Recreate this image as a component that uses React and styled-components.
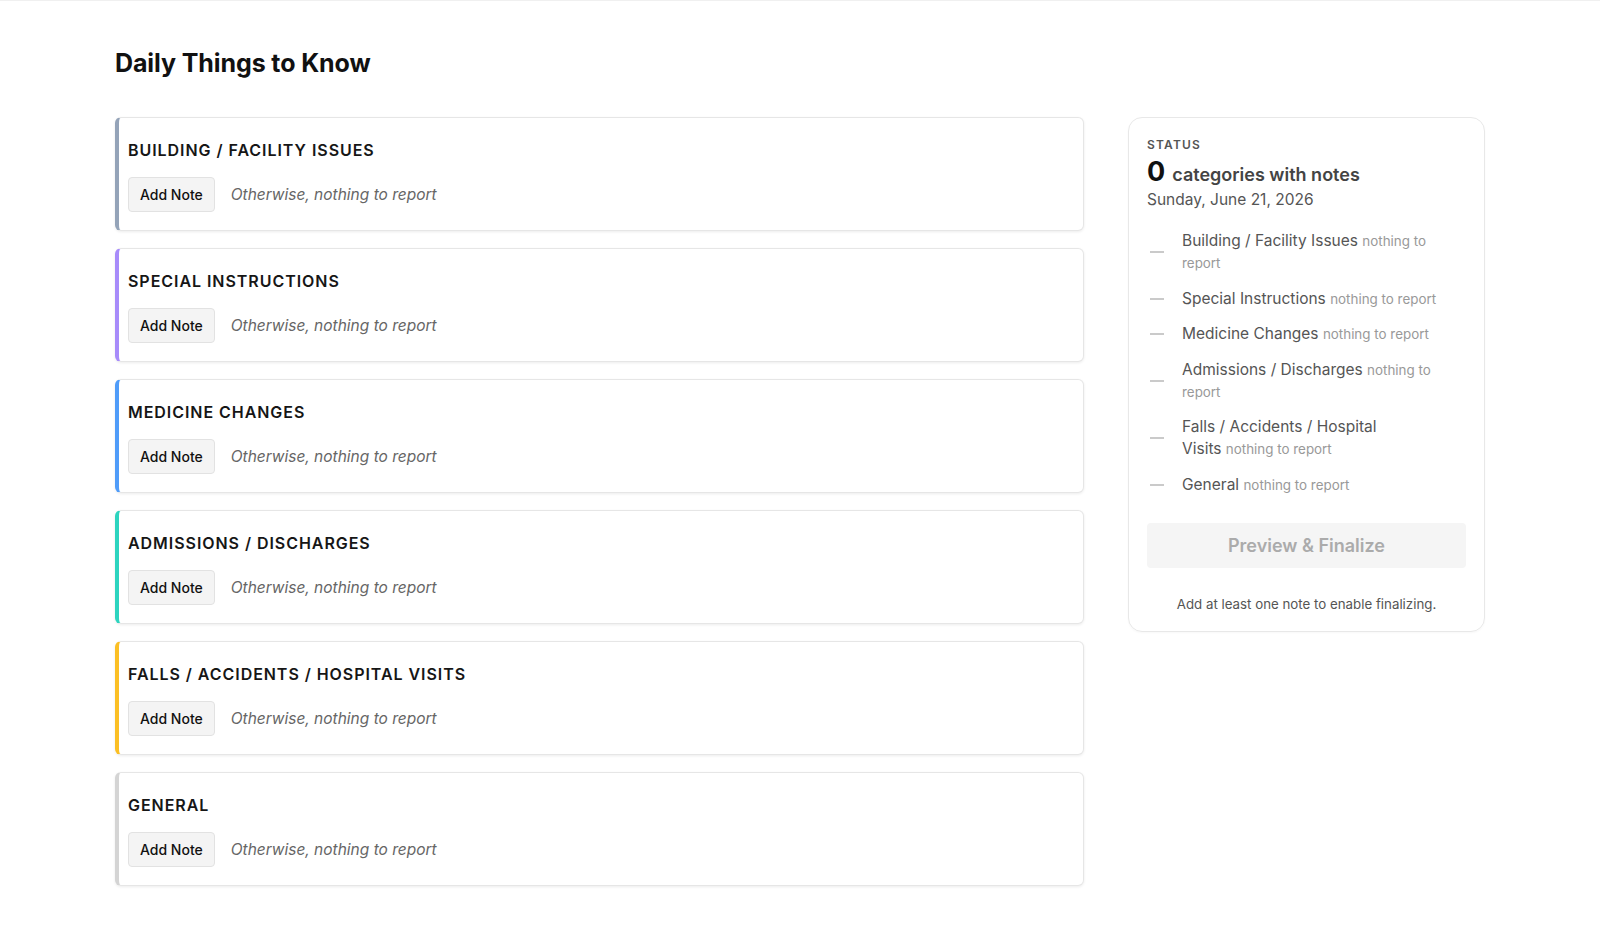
import React from 'react';
import styled, { createGlobalStyle } from 'styled-components';

//#region styles
const GlobalStyle = createGlobalStyle`
	* { box-sizing: border-box; }
	body {
		margin: 0;
		background: #fff;
		font-family: Inter, "Liberation Sans", sans-serif;
		color: #111;
		border-top: 1px solid #f0f0f0;
	}
`;

const Page = styled.div`
	max-width: 1370px;
	margin: 0 auto;
	padding: 46px 0 40px;
`;

const Title = styled.h1`
	margin: 0 0 38px;
	font-size: 25px;
	line-height: 32px;
	font-weight: 700;
	letter-spacing: -0.1px;
	color: #111;
`;

const Layout = styled.div`
	display: grid;
	grid-template-columns: 1fr 357px;
	gap: 44px;
	align-items: start;
`;

const CardList = styled.div`
	display: flex;
	flex-direction: column;
	gap: 17px;
`;

const Card = styled.section`
	border: 1px solid #e6e6e6;
	border-left: 4px solid ${(p) => p.accent};
	border-radius: 6px;
	box-shadow: 0 1px 3px rgba(0, 0, 0, 0.08);
	padding: 20px 18px 18px 9px;
	background: #fff;
`;

const CardTitle = styled.h2`
	margin: 0 0 15px;
	font-size: 16px;
	line-height: 24px;
	font-weight: 600;
	letter-spacing: 0.95px;
	text-transform: uppercase;
	color: #161616;
`;

const Row = styled.div`
	display: flex;
	align-items: center;
	gap: 16px;
`;

const AddButton = styled.button`
	height: 35px;
	padding: 0 11px;
	border: 1px solid #e2e2e2;
	border-radius: 4px;
	background: #f4f4f4;
	font-family: inherit;
	font-size: 14px;
	font-weight: 500;
	color: #111;
	cursor: pointer;
`;

const Placeholder = styled.span`
	font-size: 15.5px;
	font-style: italic;
	color: #666;
`;

const Panel = styled.aside`
	border: 1px solid #e8e8e8;
	border-radius: 14px;
	box-shadow: 0 1px 2px rgba(0, 0, 0, 0.03);
	padding: 19px 18px 18px;
`;

const Eyebrow = styled.div`
	font-size: 12px;
	line-height: 16px;
	font-weight: 600;
	letter-spacing: 1.2px;
	text-transform: uppercase;
	color: #555;
`;

const Count = styled.div`
	margin-top: 5px;
	display: flex;
	align-items: baseline;
	gap: 7px;
	line-height: 28px;
	font-size: 18px;
	font-weight: 600;
	color: #444;

	strong {
		font-size: 27px;
		font-weight: 700;
		color: #111;
	}
`;

const DateLine = styled.div`
	font-size: 15.5px;
	line-height: 22px;
	color: #555;
`;

const StatusList = styled.ul`
	list-style: none;
	margin: 19px 0 0;
	padding: 0;
	display: flex;
	flex-direction: column;
	gap: 13.5px;
`;

const StatusItem = styled.li`
	display: flex;
	align-items: center;
	gap: 18px;
`;

const Dash = styled.span`
	flex: 0 0 14px;
	height: 2px;
	margin-left: 3px;
	background: #cacaca;
`;

const StatusText = styled.span`
	font-size: 15.5px;
	line-height: 22px;
	color: #555;

	small {
		font-size: 13.4px;
		color: #999;
	}
`;

const FinalizeButton = styled.button`
	display: block;
	width: 100%;
	height: 45px;
	margin-top: 27px;
	border: none;
	border-radius: 4px;
	background: #f5f5f5;
	font-family: inherit;
	font-size: 18px;
	font-weight: 600;
	color: #ababab;
`;

const Hint = styled.p`
	margin: 27px 0 0;
	text-align: center;
	font-size: 13.3px;
	line-height: 18px;
	color: #555;
`;
//#endregion

const categories = [
	{ name: 'Building / Facility Issues', accent: '#94a3b8' },
	{ name: 'Special Instructions', accent: '#a78bfa' },
	{ name: 'Medicine Changes', accent: '#4f9cf9' },
	{ name: 'Admissions / Discharges', accent: '#2dd4bf' },
	{ name: 'Falls / Accidents / Hospital Visits', accent: '#fbbf24' },
	{ name: 'General', accent: '#d4d4d4' },
];

const App = () => {
	const withNotes = 0;

	return (
		<>
			<GlobalStyle />
			<Page>
				<Title>Daily Things to Know</Title>
				<Layout>
					<CardList>
						{categories.map((c) => (
							<Card key={c.name} accent={c.accent}>
								<CardTitle>{c.name}</CardTitle>
								<Row>
									<AddButton>Add Note</AddButton>
									<Placeholder>Otherwise, nothing to report</Placeholder>
								</Row>
							</Card>
						))}
					</CardList>

					<Panel>
						<Eyebrow>Status</Eyebrow>
						<Count>
							<strong>{withNotes}</strong>
							categories with notes
						</Count>
						<DateLine>Sunday, June 21, 2026</DateLine>
						<StatusList>
							{categories.map((c) => (
								<StatusItem key={c.name}>
									<Dash />
									<StatusText>
										{c.name}{'\u00a0'}<small>nothing to report</small>
									</StatusText>
								</StatusItem>
							))}
						</StatusList>
						<FinalizeButton disabled>Preview &amp; Finalize</FinalizeButton>
						<Hint>Add at least one note to enable finalizing.</Hint>
					</Panel>
				</Layout>
			</Page>
		</>
	);
};

export default App;
